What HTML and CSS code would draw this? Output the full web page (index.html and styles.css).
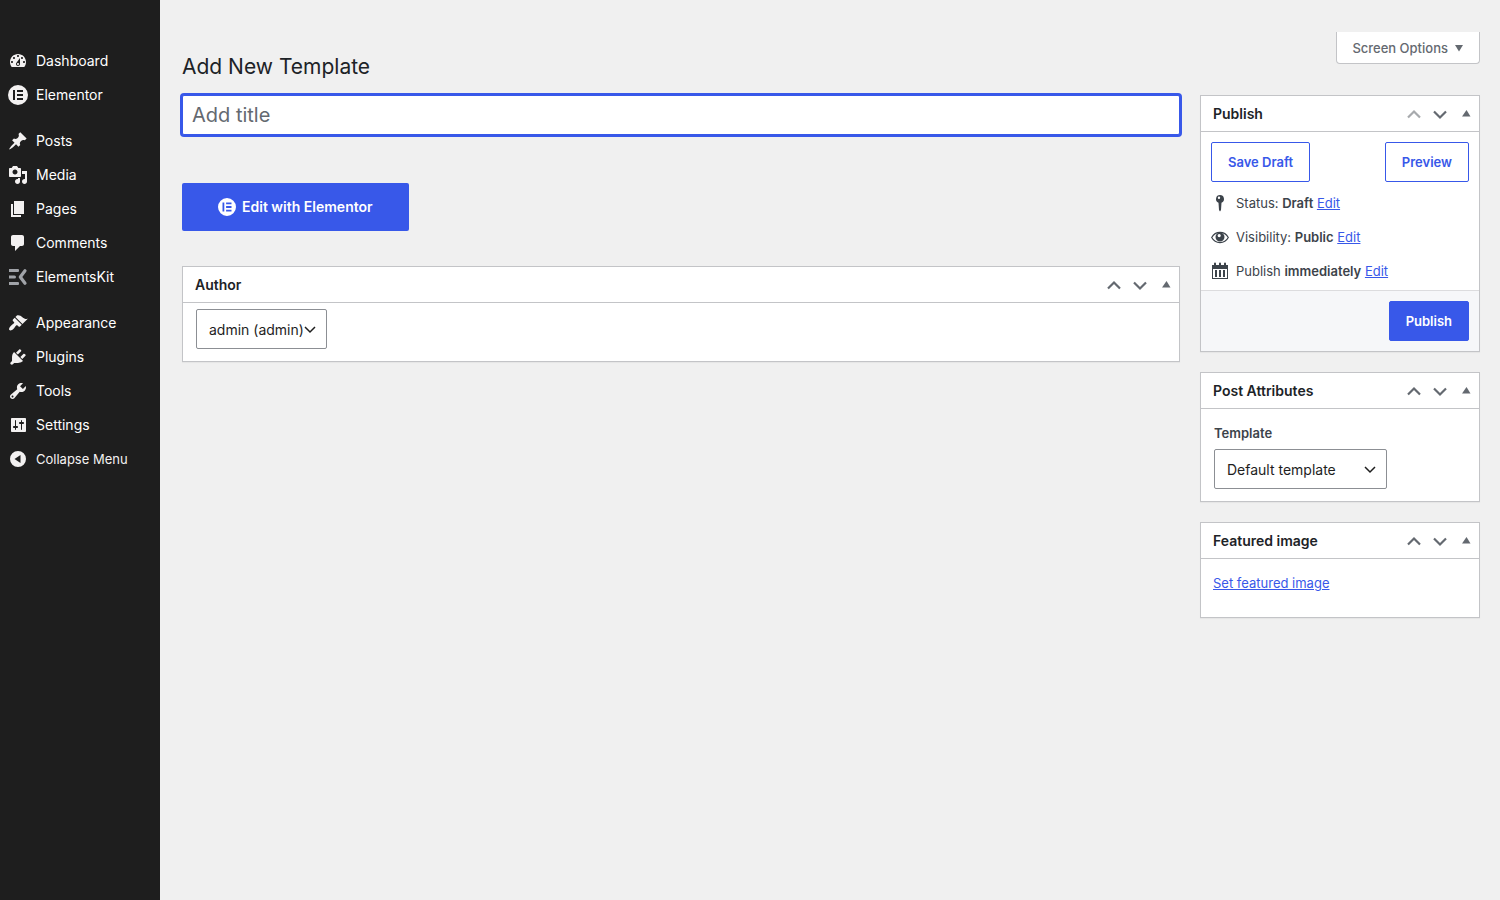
FILE: index.html
```html
<!DOCTYPE html>
<html lang="en">

<head>
  <meta charset="UTF-8">
  <meta name="viewport" content="width=device-width, initial-scale=1.0">
  <title>Add New Template</title>
  <link rel="stylesheet" href="styles.css">
</head>

<body>
  <!-- shared icons -->
  <svg class="sprite" aria-hidden="true">
    <symbol id="up" viewBox="0 0 20 20"><path d="M4 13.5l6-6 6 6" fill="none" stroke="currentColor" stroke-width="2.2"/></symbol>
    <symbol id="down" viewBox="0 0 20 20"><path d="M4 7.5l6 6 6-6" fill="none" stroke="currentColor" stroke-width="2.2"/></symbol>
    <symbol id="toggle" viewBox="0 0 20 20"><path d="M6 12.5l4.5-6.5 4 6.5z" fill="currentColor"/></symbol>
    <symbol id="elementor" viewBox="0 0 20 20"><path fill="currentColor" fill-rule="evenodd" d="M10 0a10 10 0 1 0 0 20 10 10 0 0 0 0-20zM5 5h2v10H5zM9 5h6v2H9zM9 9h6v2H9zM9 13h6v2H9z"/></symbol>
  </svg>

  <nav class="sidebar" aria-label="Main menu">
    <ul>
      <li><a href="#"><svg viewBox="0 0 20 20"><path d="M3.76 16h12.48c1.1-1.37 1.76-3.11 1.76-5 0-4.42-3.58-8-8-8s-8 3.58-8 8c0 1.89.66 3.63 1.76 5zM10 4c.55 0 1 .45 1 1s-.45 1-1 1-1-.45-1-1 .45-1 1-1zM6 6c.55 0 1 .45 1 1s-.45 1-1 1-1-.45-1-1 .45-1 1-1zm8 0c.55 0 1 .45 1 1s-.45 1-1 1-1-.45-1-1 .45-1 1-1zm-5.37 5.55L12 7v6c0 1.1-.9 2-2 2s-2-.9-2-2c0-.57.24-1.08.63-1.45zM4 10c.55 0 1 .45 1 1s-.45 1-1 1-1-.45-1-1 .45-1 1-1zm12 0c.55 0 1 .45 1 1s-.45 1-1 1-1-.45-1-1 .45-1 1-1zm-5 3c0-.55-.45-1-1-1s-1 .45-1 1 .45 1 1 1 1-.45 1-1z" fill-rule="evenodd"/></svg>Dashboard</a></li>
      <li><a href="#"><svg><use href="#elementor"/></svg>Elementor</a></li>
      <li class="separator"></li>
      <li><a href="#"><svg viewBox="0 0 20 20"><path d="M10.44 3.02l1.82-1.82 6.36 6.35-1.83 1.82c-1.05-.68-2.48-.57-3.41.36l-.75.75c-.92.93-1.04 2.35-.35 3.41l-1.83 1.82-2.41-2.41-2.8 2.79c-.42.42-3.38 2.71-3.8 2.29s1.86-3.39 2.28-3.81l2.79-2.79L4.1 9.36l1.83-1.82c1.05.69 2.48.57 3.4-.36l.75-.75c.93-.92 1.05-2.35.36-3.41z"/></svg>Posts</a></li>
      <li><a href="#"><svg viewBox="0 0 20 20"><path d="M13 11V4c0-.55-.45-1-1-1h-1.67L9 1H5L3.67 3H2c-.55 0-1 .45-1 1v7c0 .55.45 1 1 1h10c.55 0 1-.45 1-1zM7 4.5c1.38 0 2.5 1.12 2.5 2.5S8.38 9.5 7 9.5 4.5 8.38 4.5 7 5.62 4.5 7 4.5zM14 6h5v10.5c0 1.38-1.12 2.5-2.5 2.5S14 17.88 14 16.5s1.12-2.5 2.5-2.5c.17 0 .34.02.5.05V9h-3V6zm-4 8.05V13h2v3.5c0 1.38-1.12 2.5-2.5 2.5S7 17.88 7 16.5 8.12 14 9.5 14c.17 0 .34.02.5.05z" fill-rule="evenodd"/></svg>Media</a></li>
      <li><a href="#"><svg viewBox="0 0 20 20"><path d="M6 15V2h10v13H6zm-1 1h8v2H3V5h2v11z"/></svg>Pages</a></li>
      <li><a href="#"><svg viewBox="0 0 20 20"><path d="M5 2h9c1.1 0 2 .9 2 2v7c0 1.1-.9 2-2 2h-2l-5 5v-5H5c-1.1 0-2-.9-2-2V4c0-1.1.9-2 2-2z"/></svg>Comments</a></li>
      <li><a href="#"><svg class="dim" viewBox="0 0 20 20"><path d="M1 2h9a1 1 0 0 1 1 1v1a1 1 0 0 1-1 1H1zM1 8.500h5.500a1.500 1.500 0 0 1 0 3H1zM1 15h9a1 1 0 0 1 1 1v1a1 1 0 0 1-1 1H1z"/><path d="M17 3.800L12.300 10l4.700 6.200" fill="none" stroke="currentColor" stroke-width="3.200" stroke-linecap="round" stroke-linejoin="round"/></svg>ElementsKit</a></li>
      <li class="separator"></li>
      <li><a href="#"><svg viewBox="0 0 20 20"><path d="M14.48 11.06L7.41 3.99l1.5-1.5c.5-.56 2.3-.47 3.51.32 1.21.8 1.43 1.28 2.91 2.1 1.18.64 2.45 1.26 4.45.85zm-.71.71L6.7 4.7 4.93 6.47c-.39.39-.39 1.02 0 1.41l1.06 1.06c.39.39.39 1.03 0 1.42-.6.6-1.43 1.11-2.21 1.69-.35.26-.7.53-1.01.84C1.43 14.23.4 16.08 1.4 17.07c.99 1 2.84-.03 4.18-1.36.31-.31.58-.66.85-1.02.57-.78 1.08-1.61 1.69-2.21.39-.39 1.02-.39 1.41 0l1.06 1.06c.39.39 1.02.39 1.41 0z"/></svg>Appearance</a></li>
      <li><a href="#"><svg viewBox="0 0 20 20"><path d="M13.11 4.36L9.87 7.6 8 5.73l3.24-3.24c.35-.34 1.05-.2 1.56.32.52.51.66 1.21.31 1.55zm-8 1.77l.91-1.12 9.01 9.01-1.19.84c-.71.71-2.63 1.16-3.82 1.16H6.14L4.9 17.26c-.59.59-1.54.59-2.12 0-.59-.58-.59-1.53 0-2.12l1.24-1.24v-3.88c0-1.13.4-3.19 1.09-3.89zm7.26 3.97l3.24-3.24c.34-.35 1.04-.21 1.55.31.52.51.66 1.21.31 1.55l-3.24 3.25z"/></svg>Plugins</a></li>
      <li><a href="#"><svg viewBox="0 0 20 20"><path d="M16.68 9.77c-1.34 1.34-3.3 1.67-4.95.99l-5.41 6.52c-.99.99-2.59.99-3.58 0s-.99-2.59 0-3.57l6.52-5.42c-.68-1.65-.35-3.61.99-4.95 1.28-1.28 3.12-1.62 4.72-1.06l-2.89 2.89 2.82 2.82 2.86-2.87c.53 1.58.18 3.39-1.08 4.65zM3.81 16.21c.4.39 1.04.39 1.43 0 .4-.4.4-1.04 0-1.43-.39-.4-1.03-.4-1.43 0-.39.39-.39 1.03 0 1.43z" fill-rule="evenodd"/></svg>Tools</a></li>
      <li><a href="#"><svg viewBox="0 0 20 20"><path d="M18 16V4c0-.55-.45-1-1-1H4c-.55 0-1 .45-1 1v12c0 .55.45 1 1 1h13c.55 0 1-.45 1-1zM8 11h1c.55 0 1 .45 1 1s-.45 1-1 1H8v1.500c0 .28-.22.5-.5.5s-.5-.22-.5-.5V13H6c-.55 0-1-.45-1-1s.45-1 1-1h1V5.500c0-.28.22-.5.5-.5s.5.22.5.5V11zm5-2h-1c-.55 0-1-.45-1-1s.45-1 1-1h1V5.500c0-.28.22-.5.5-.5s.5.22.5.5V7h1c.55 0 1 .45 1 1s-.45 1-1 1h-1v5.500c0 .28-.22.5-.5.5s-.5-.22-.5-.5V9z" fill-rule="evenodd"/></svg>Settings</a></li>
      <li><button type="button" class="collapse"><svg viewBox="0 0 20 20"><path d="M10 2a8 8 0 1 0 0 16 8 8 0 0 0 0-16zM12.500 6v8L6.500 10z" fill-rule="evenodd"/></svg>Collapse Menu</button></li>
    </ul>
  </nav>

  <main class="content">
    <header class="page-header">
      <h1>Add New Template</h1>
      <button type="button" class="screen-options">Screen Options
        <svg viewBox="0 0 10 10"><path d="M1 2h8L5 8.500z" fill="currentColor"/></svg>
      </button>
    </header>

    <form class="editor">
      <div class="column-main">
        <input class="title-input" type="text" placeholder="Add title" aria-label="Add title">

        <a class="elementor-button" href="#"><svg><use href="#elementor"/></svg>Edit with Elementor</a>

        <section class="postbox">
          <div class="postbox-header">
            <h2><label for="author">Author</label></h2>
            <div class="handles">
              <button type="button" aria-label="Move up"><svg><use href="#up"/></svg></button>
              <button type="button" aria-label="Move down"><svg><use href="#down"/></svg></button>
              <button type="button" aria-label="Toggle panel"><svg><use href="#toggle"/></svg></button>
            </div>
          </div>
          <div class="author-body">
            <select id="author">
              <option>admin (admin)</option>
            </select>
          </div>
        </section>
      </div>

      <div class="column-side">
        <section class="postbox">
          <div class="postbox-header">
            <h2>Publish</h2>
            <div class="handles">
              <button type="button" aria-label="Move up" disabled><svg><use href="#up"/></svg></button>
              <button type="button" aria-label="Move down"><svg><use href="#down"/></svg></button>
              <button type="button" aria-label="Toggle panel"><svg><use href="#toggle"/></svg></button>
            </div>
          </div>
          <div class="minor-actions">
            <button type="button" class="button">Save Draft</button>
            <button type="button" class="button">Preview</button>
          </div>
          <ul class="misc-actions">
            <li>
              <svg viewBox="0 0 20 20"><path fill-rule="evenodd" d="M10 2a4 4 0 0 1 1.500 7.700L11 17l-1 1.500L9 17l-.500-7.300A4 4 0 0 1 10 2zM9 3.500a1.200 1.200 0 1 0 0 2.400 1.200 1.200 0 0 0 0-2.400z"/></svg>
              <span>Status: <b>Draft</b> <a href="#">Edit</a></span>
            </li>
            <li>
              <svg viewBox="0 0 20 20"><path d="M1.700 10.500C3.500 7.200 6.500 5.400 10 5.400s6.500 1.800 8.300 5.100c-1.800 3.300-4.800 5.100-8.300 5.100s-6.500-1.800-8.300-5.100z" fill="none" stroke="currentColor" stroke-width="1.200"/><path fill-rule="evenodd" d="M10 5.500a4.500 4.500 0 1 1 0 9 4.500 4.500 0 0 1 0-9zM9.200 7a1.600 1.600 0 1 0 0 3.200 1.600 1.600 0 0 0 0-3.200z"/></svg>
              <span>Visibility: <b>Public</b> <a href="#">Edit</a></span>
            </li>
            <li>
              <svg viewBox="0 0 20 20"><path fill-rule="evenodd" d="M2 4h2V2.500a1 1 0 0 1 2 0V4h3V2.500a1 1 0 0 1 2 0V4h3V2.500a1 1 0 0 1 2 0V4h2v14H2zM3 8v9h14V8zM5 9h2v7H5zM9 9h2v7H9zM13 9h2v7h-2z"/></svg>
              <span>Publish <b>immediately</b> <a href="#">Edit</a></span>
            </li>
          </ul>
          <div class="major-actions">
            <button type="submit" class="button primary">Publish</button>
          </div>
        </section>

        <section class="postbox">
          <div class="postbox-header">
            <h2>Post Attributes</h2>
            <div class="handles">
              <button type="button" aria-label="Move up"><svg><use href="#up"/></svg></button>
              <button type="button" aria-label="Move down"><svg><use href="#down"/></svg></button>
              <button type="button" aria-label="Toggle panel"><svg><use href="#toggle"/></svg></button>
            </div>
          </div>
          <div class="attributes-body">
            <label for="template">Template</label>
            <select id="template">
              <option>Default template</option>
              <option>Elementor Canvas</option>
              <option>Elementor Full Width</option>
            </select>
          </div>
        </section>

        <section class="postbox">
          <div class="postbox-header">
            <h2>Featured image</h2>
            <div class="handles">
              <button type="button" aria-label="Move up"><svg><use href="#up"/></svg></button>
              <button type="button" aria-label="Move down"><svg><use href="#down"/></svg></button>
              <button type="button" aria-label="Toggle panel"><svg><use href="#toggle"/></svg></button>
            </div>
          </div>
          <div class="image-body">
            <a href="#">Set featured image</a>
          </div>
        </section>
      </div>
    </form>
  </main>
</body>

</html>
```
FILE: styles.css
```css
* {
  box-sizing: border-box;
}

body {
  display: flex;
  min-height: 100vh;
  margin: 0;
  background-color: #f0f0f0;
  color: #3c434a;
  font-family: Inter, "Liberation Sans", sans-serif;
  font-size: 13px;
  line-height: 18px;
}

h1,
h2,
ul {
  margin: 0;
  padding: 0;
}

ul {
  list-style: none;
}

a {
  color: #3858e9;
}

button,
input,
select {
  font-family: inherit;
  margin: 0;
}

button {
  cursor: pointer;
}

svg {
  width: 20px;
  height: 20px;
  flex: none;
  fill: currentColor;
}

.sprite {
  display: none;
}

/* Sidebar */

.sidebar {
  flex: none;
  width: 160px;
  padding-top: 44px;
  background-color: #1e1e1e;
}

.sidebar a,
.collapse {
  display: flex;
  align-items: center;
  gap: 8px;
  width: 100%;
  height: 34px;
  padding: 0 8px;
  border: 0;
  background: none;
  color: #fff;
  font-size: 14px;
  text-decoration: none;
}

.sidebar svg {
  color: #f3f1f1;
}

.sidebar .dim {
  color: #a0a3a8;
}

.sidebar .collapse {
  color: #f3f1f1;
  font-size: 13px;
}

.separator {
  height: 12px;
}

/* Page */

.content {
  flex: 1;
  min-width: 0;
  padding: 32px 20px 0 22px;
}

.page-header {
  display: flex;
  justify-content: space-between;
  align-items: flex-start;
  height: 63px;
}

h1 {
  padding-top: 20px;
  color: #1d2327;
  font-size: 21px;
  font-weight: 400;
  line-height: 30px;
}

.screen-options {
  display: flex;
  align-items: center;
  gap: 6px;
  height: 32px;
  padding: 0 15px;
  border: 1px solid #c3c4c7;
  border-top: 0;
  border-radius: 0 0 4px 4px;
  background-color: #fff;
  color: #646970;
  font-size: 13px;
  font-weight: 500;
}

.screen-options svg {
  width: 10px;
  height: 10px;
}

.editor {
  display: grid;
  grid-template-columns: minmax(0, 1fr) 280px;
  gap: 20px;
  align-items: start;
}

.title-input {
  display: block;
  width: 100%;
  height: 40px;
  padding: 0 9px;
  border: 1px solid #3858e9;
  border-radius: 2px;
  box-shadow: 0 0 0 2px #3858e9;
  background-color: #fff;
  color: #1d2327;
  font-size: 20px;
  outline: 0;
}

.title-input::placeholder {
  color: #646970;
}

.elementor-button {
  display: inline-flex;
  align-items: center;
  gap: 6px;
  height: 48px;
  margin: 48px 0 35px;
  padding: 0 36px;
  border-radius: 2px;
  background-color: #3858e9;
  color: #fff;
  font-size: 14px;
  font-weight: 600;
  text-decoration: none;
}

.elementor-button svg {
  width: 18px;
  height: 18px;
}

/* Boxes */

.postbox {
  border: 1px solid #c3c4c7;
  background-color: #fff;
  box-shadow: 0 1px 1px rgba(0, 0, 0, 0.04);
}

.column-side {
  display: grid;
  gap: 20px;
}

.postbox-header {
  display: flex;
  justify-content: space-between;
  align-items: center;
  height: 36px;
  padding-left: 12px;
  border-bottom: 1px solid #c3c4c7;
}

h2 {
  color: #1d2327;
  font-size: 14px;
  font-weight: 600;
}

.handles {
  display: flex;
}

.handles button {
  display: flex;
  justify-content: center;
  align-items: center;
  width: 26px;
  height: 34px;
  padding: 0;
  border: 0;
  background: none;
  color: #646970;
}

.handles button:disabled {
  color: #a7aaad;
  cursor: default;
}

select {
  display: block;
  height: 40px;
  padding: 0 22px 0 12px;
  border: 1px solid #8c8f94;
  border-radius: 2px;
  appearance: none;
  background: #fff url("data:image/svg+xml,%3Csvg xmlns='http://www.w3.org/2000/svg' viewBox='0 0 16 16'%3E%3Cpath d='M3 6l5 5 5-5' fill='none' stroke='%231e1e1e' stroke-width='1.5'/%3E%3C/svg%3E") no-repeat right 8px center / 16px 16px;
  color: #1e1e1e;
  font-size: 14px;
}

.author-body {
  padding: 6px 13px 12px;
}

.attributes-body {
  padding: 15px 13px 12px;
}

.attributes-body label {
  display: block;
  margin-bottom: 7px;
  font-weight: 600;
}

.image-body {
  padding: 15px 12px 25px;
}

.button {
  height: 40px;
  padding: 0 16px;
  border: 1px solid #3858e9;
  border-radius: 2px;
  background-color: #fff;
  color: #3858e9;
  font-size: 13px;
  font-weight: 600;
}

.button.primary {
  background-color: #3858e9;
  color: #fff;
}

.minor-actions {
  display: flex;
  justify-content: space-between;
  padding: 10px 10px 4px;
}

.misc-actions {
  padding: 0 9px 2px;
}

.misc-actions li {
  display: flex;
  align-items: center;
  gap: 6px;
  height: 34px;
}

.misc-actions b {
  font-weight: 600;
}

.major-actions {
  display: flex;
  justify-content: flex-end;
  padding: 10px;
  border-top: 1px solid #dcdcde;
  background-color: #f6f7f9;
}
```
